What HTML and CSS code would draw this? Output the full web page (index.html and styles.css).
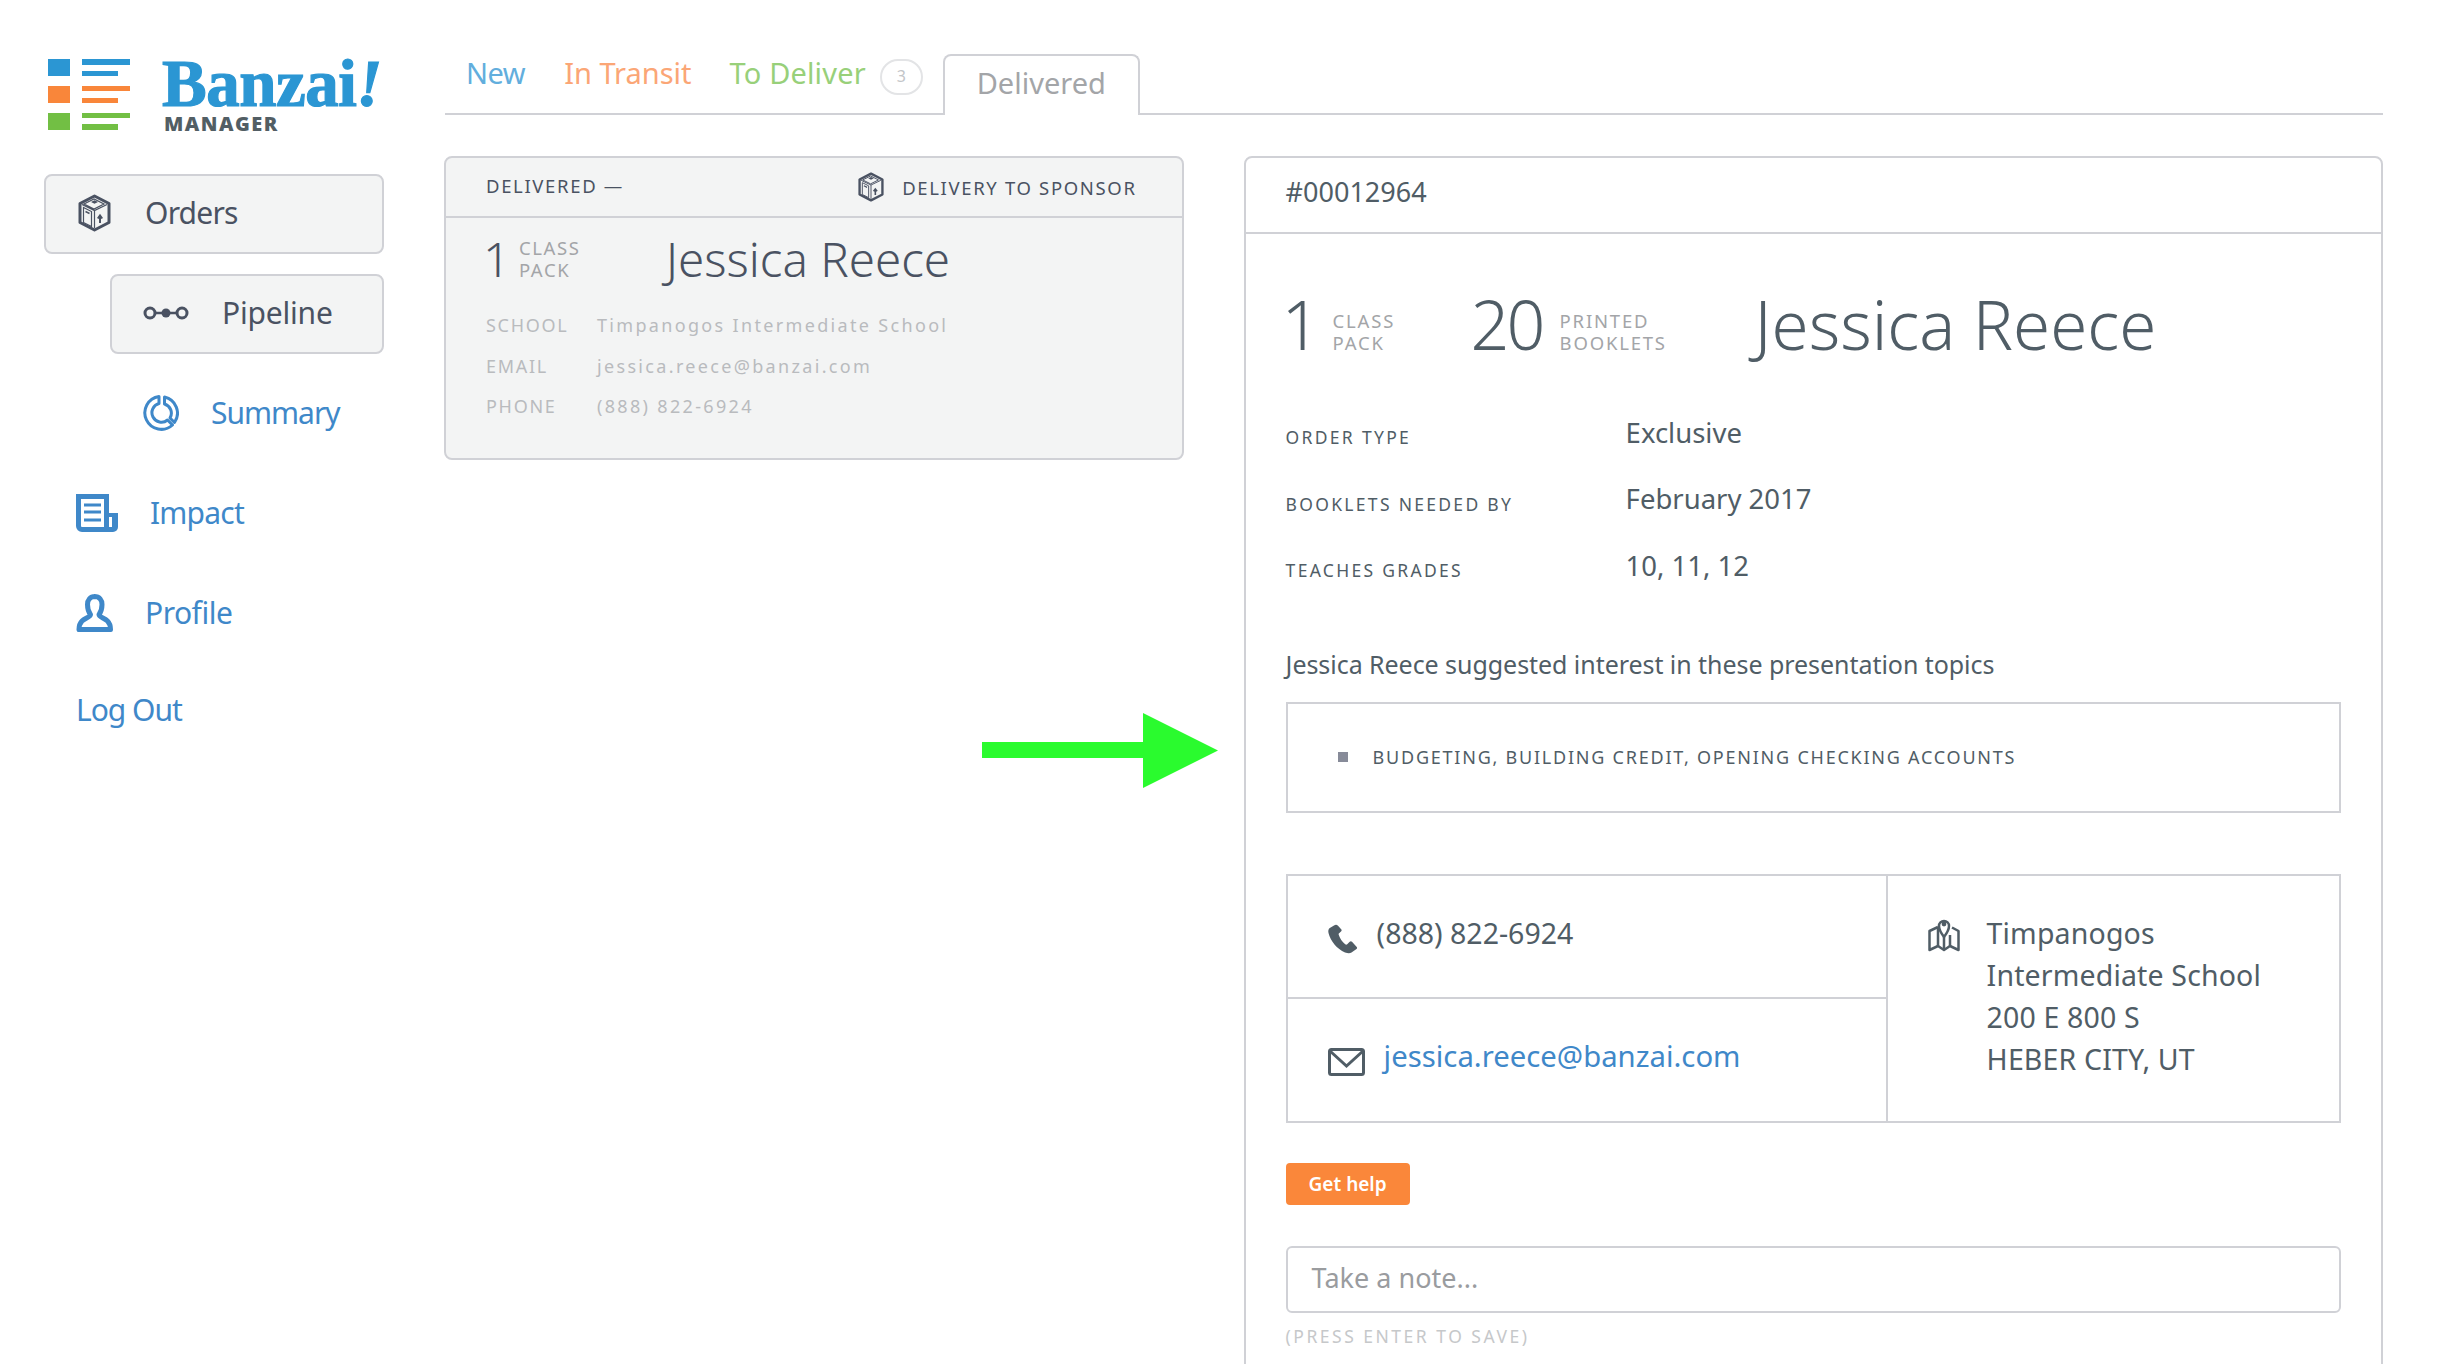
FILE: index.html
```html
<!DOCTYPE html>
<html lang="en">
<head>
<meta charset="utf-8">
<title>Banzai! Manager</title>
<link rel="stylesheet" href="styles.css">
</head>
<body>
<svg width="0" height="0" class="defs">
  <defs>
    <symbol id="box" viewBox="0 0 33 38">
      <path d="M16.5 2 31 9.5v19L16.5 36 2 28.500v-19z" fill="none" stroke="currentColor" stroke-width="3" stroke-linejoin="round"/>
      <path d="M4 10.500 16.500 16.500 29 10.500M16.500 16.500V34M5.500 13.500l8 4v15l-8-4zM6 10l10-5 10 5-10 5z" fill="none" stroke="currentColor" stroke-width="1.200"/>
      <path d="M13 8l3.500-1.800L20 8l-3.500 1.800z" fill="currentColor"/>
      <path d="M7.500 17.500l4 2" fill="none" stroke="currentColor" stroke-width="1.500"/>
      <path d="M22 29v-7M19.800 24.500 22 21.500l2.200 3" fill="none" stroke="currentColor" stroke-width="2"/>
    </symbol>
  </defs>
</svg>
<div class="page">
  <aside class="sidebar">
    <div class="logo">
      <svg class="logo-mark" viewBox="0 0 82 71" aria-hidden="true">
        <rect x="0" y="0" width="22" height="17" fill="#2b96d3"/>
        <rect x="34" y="0" width="48" height="6" fill="#2b96d3"/>
        <rect x="34" y="12" width="36" height="5" fill="#2b96d3"/>
        <rect x="0" y="27" width="22" height="17" fill="#f9863a"/>
        <rect x="34" y="27" width="48" height="5" fill="#f9863a"/>
        <rect x="34" y="39" width="36" height="5" fill="#f9863a"/>
        <rect x="0" y="54" width="22" height="17" fill="#72bf44"/>
        <rect x="34" y="54" width="48" height="5" fill="#72bf44"/>
        <rect x="34" y="65" width="36" height="6" fill="#72bf44"/>
      </svg>
      <div class="logo-words">
        <div class="logo-name">Banzai<em class="logo-bang">!</em></div>
        <div class="logo-sub">MANAGER</div>
      </div>
    </div>
    <nav class="nav">
      <a class="nav-item nav-orders is-box">
        <svg class="ic-orders"><use href="#box"/></svg>
        <span>Orders</span>
      </a>
      <a class="nav-item nav-pipeline is-box">
        <svg class="ic-pipeline" viewBox="0 0 46 14" aria-hidden="true">
          <circle cx="7" cy="7" r="5" fill="none" stroke="currentColor" stroke-width="3"/>
          <circle cx="23" cy="7" r="4.500" fill="currentColor"/>
          <circle cx="39" cy="7" r="5" fill="none" stroke="currentColor" stroke-width="3"/>
          <path d="M12 7h22" stroke="currentColor" stroke-width="2.500"/>
        </svg>
        <span>Pipeline</span>
      </a>
      <a class="nav-item nav-summary">
        <svg class="ic-summary" viewBox="0 0 36 36" aria-hidden="true">
          <path d="M16 1.500A16.500 16.500 0 1 0 29.500 30L24.500 25A9.500 9.500 0 1 1 16 8.500z" fill="none" stroke="currentColor" stroke-width="3" stroke-linejoin="round"/>
          <path d="M21.500 2A16.500 16.500 0 0 1 31.500 27.500L27 23A9.500 9.500 0 0 0 21.500 9z" fill="none" stroke="currentColor" stroke-width="3" stroke-linejoin="round"/>
        </svg>
        <span>Summary</span>
      </a>
      <a class="nav-item nav-impact">
        <svg class="ic-impact" viewBox="0 0 42 38" aria-hidden="true">
          <path d="M2.500 2.500h28v33H6a3.500 3.500 0 0 1-3.500-3.500z" fill="none" stroke="currentColor" stroke-width="5"/>
          <path d="M30 19h12v14a5 5 0 0 1-5 5h-7z" fill="currentColor"/>
          <path d="M33 23h3v10h-3z" fill="#fff"/>
          <path d="M8 11h17M8 18h17M8 26h17" stroke="currentColor" stroke-width="3"/>
        </svg>
        <span>Impact</span>
      </a>
      <a class="nav-item nav-profile">
        <svg class="ic-profile" viewBox="0 0 37 38" aria-hidden="true">
          <path d="M18.500 2.500c5 0 7.500 3.500 7.500 8 0 4.500-1 7.500-3 10 0 2.500 5.500 3.500 8.500 6.500 2 2 3 5 3 8.500H3c0-3.500 1-6.500 3-8.500 3-3 8.500-4 8.500-6.500-2-2.500-3-5.500-3-10 0-4.500 2.500-8 7.500-8z" fill="none" stroke="currentColor" stroke-width="5" stroke-linejoin="round"/>
          <path d="M1 33h35v3a2 2 0 0 1-2 2H3a2 2 0 0 1-2-2z" fill="currentColor"/>
        </svg>
        <span>Profile</span>
      </a>
      <a class="nav-item nav-logout"><span>Log Out</span></a>
    </nav>
  </aside>

  <main class="main">
    <div class="tabs">
      <a class="tab tab-new">New</a>
      <a class="tab tab-transit">In Transit</a>
      <a class="tab tab-deliver">To Deliver</a>
      <span class="badge">3</span>
      <a class="tab-active">Delivered</a>
    </div>
    <div class="content">
      <section class="order-card">
        <header class="order-head">
          <span class="status">DELIVERED —</span>
          <span class="delivery">
            <svg class="ic-delivery"><use href="#box"/></svg>
            DELIVERY TO SPONSOR
          </span>
        </header>
        <div class="order-body">
          <div class="order-title">
            <span class="count-sm">1</span>
            <span class="unit-sm">CLASS<br>PACK</span>
            <span class="name-sm">Jessica Reece</span>
          </div>
          <dl class="facts">
            <dt>SCHOOL</dt><dd>Timpanogos Intermediate School</dd>
            <dt>EMAIL</dt><dd>jessica.reece@banzai.com</dd>
            <dt>PHONE</dt><dd>(888) 822-6924</dd>
          </dl>
        </div>
      </section>

      <section class="detail">
        <header class="detail-head">#00012964</header>
        <div class="detail-body">
          <div class="detail-title">
            <span class="count-lg">1</span>
            <span class="unit-lg">CLASS<br>PACK</span>
            <span class="count-lg count-20">20</span>
            <span class="unit-lg">PRINTED<br>BOOKLETS</span>
            <span class="name-lg">Jessica Reece</span>
          </div>
          <div class="meta">
            <div class="meta-row"><span class="meta-key">ORDER TYPE</span><span class="meta-val">Exclusive</span></div>
            <div class="meta-row"><span class="meta-key">BOOKLETS NEEDED BY</span><span class="meta-val">February 2017</span></div>
            <div class="meta-row"><span class="meta-key">TEACHES GRADES</span><span class="meta-val">10, 11, 12</span></div>
          </div>
          <p class="topics-intro">Jessica Reece suggested interest in these presentation topics</p>
          <div class="topics"><i class="bullet"></i><span>BUDGETING, BUILDING CREDIT, OPENING CHECKING ACCOUNTS</span></div>
          <div class="contact">
            <div class="contact-left">
              <div class="contact-cell">
                <svg class="ic-phone" viewBox="0 0 30 30" aria-hidden="true">
                  <path d="M6 1.500 1.800 4C.5 5 0 6.500.5 9 2.500 17 9 25 17 28.500c3 1 5 1 6.500 0l5-3.500c.8-.8.8-1.500 0-2.300L24 17.800c-.8-.8-1.500-.8-2.300 0l-2.500 2.500c-.6.6-1.200.6-2 0-3-2.500-5.500-6-6.500-9.500-.2-.8 0-1.300.7-1.700L13 7.500c.7-.6.8-1.200.4-2L10 1.800C8.800.5 7.500.5 6 1.500z" fill="currentColor"/>
                </svg>
                <span>(888) 822-6924</span>
              </div>
              <div class="contact-cell cell-mail">
                <svg class="ic-mail" viewBox="0 0 37 28" aria-hidden="true">
                  <rect x="1.500" y="1.500" width="34" height="25" rx="2" fill="none" stroke="currentColor" stroke-width="3"/>
                  <path d="M2 3l16.500 15L35 3" fill="none" stroke="currentColor" stroke-width="3"/>
                </svg>
                <a class="mail-link">jessica.reece@banzai.com</a>
              </div>
            </div>
            <div class="contact-right">
              <svg class="ic-map" viewBox="0 0 32 36" aria-hidden="true">
                <path d="M10 11 1.500 15v19L10 30l6 4 6-4 8.500 4V15L24 11.500" fill="none" stroke="currentColor" stroke-width="2.500" stroke-linejoin="round"/>
                <path d="M10 11v19M22 19v11M16 21v13" fill="none" stroke="currentColor" stroke-width="2.500"/>
                <path d="M16 21c-3-4-5-7-5-11a5 5 0 0 1 10 0c0 4-2 7-5 11z" fill="#fff" stroke="currentColor" stroke-width="2.500"/>
                <circle cx="16" cy="8" r="2.400" fill="currentColor"/>
              </svg>
              <address class="address">Timpanogos<br>Intermediate School<br>200 E 800 S<br>HEBER CITY, UT</address>
            </div>
          </div>
          <button class="help">Get help</button>
          <div class="note">Take a note...</div>
          <div class="hint">(PRESS ENTER TO SAVE)</div>
        </div>
      </section>
    </div>
  </main>
</div>
<svg class="arrow" viewBox="0 0 236 75" aria-hidden="true">
  <path d="M0 29h161V0l75 37.500-75 37.500V45H0z" fill="#2afb2e"/>
</svg>
</body>
</html>
```

FILE: styles.css
```css
* { box-sizing: border-box; }
html, body { margin: 0; padding: 0; background: #fff; }
body {
  width: 2442px;
  height: 1364px;
  overflow: hidden;
  position: relative;
  font-family: "Noto Sans", "Open Sans", sans-serif;
  color: #505d66;
}
.defs { position: absolute; }
.page { display: flex; align-items: flex-start; }

/* sidebar */
.sidebar { width: 444px; flex: none; padding: 55px 60px 0 44px; }
.logo { display: flex; padding-left: 4px; height: 119px; }
.logo-mark { width: 82px; height: 71px; margin-top: 4px; flex: none; }
.logo-words { margin-left: 32px; }
.logo-name {
  font-family: "Liberation Serif", serif;
  font-weight: 700;
  font-size: 67px;
  line-height: 56px;
  letter-spacing: -0.5px;
  color: #2b96d3;
  -webkit-text-stroke: 1.2px #2b96d3;
}
.logo-bang { font-style: italic; }
.logo-sub {
  font-family: "Open Sans", sans-serif;
  font-weight: 800;
  font-size: 20px;
  line-height: 20px;
  letter-spacing: 1.500px;
  margin: 3px 0 0 2px;
  color: #525e64;
}
.nav { display: flex; flex-direction: column; }
.nav-item {
  display: flex;
  align-items: center;
  padding-bottom: 3px;
  font-size: 30px;
  letter-spacing: -0.8px;
  color: #3f88c9;
}
.is-box {
  height: 80px;
  border: 2px solid #d0d1d6;
  border-radius: 8px;
  background: #f3f4f4;
  color: #4a5262;
}
.nav-orders { padding-left: 32px; gap: 34px; }
.nav-pipeline { margin: 20px 0 0 66px; padding-left: 31px; gap: 33px; letter-spacing: -0.2px; }
.nav-summary { height: 100px; margin-top: 10px; padding-left: 99px; gap: 32px; letter-spacing: -1px; }
.nav-impact { height: 100px; padding-left: 32px; gap: 32px; }
.nav-profile { height: 100px; padding-left: 32px; gap: 32px; letter-spacing: -0.5px; }
.nav-logout { height: 94px; padding-left: 32px; letter-spacing: -1px; }
.ic-orders { width: 33px; height: 38px; }
.ic-pipeline { width: 46px; height: 14px; }
.ic-summary { width: 36px; height: 36px; }
.ic-impact { width: 42px; height: 38px; }
.ic-profile { width: 37px; height: 38px; }

/* tabs */
.main { width: 1939px; flex: none; }
.tabs {
  height: 115px;
  display: flex;
  align-items: flex-start;
  border-bottom: 2px solid #d0d1d6;
  margin-left: 1px;
  padding-left: 21px;
}
.tab { font-size: 29px; line-height: 40px; margin-top: 53px; }
.tab-new { color: #62aedd; margin-right: 39px; letter-spacing: -0.5px; }
.tab-transit { color: #fba676; margin-right: 38px; }
.tab-deliver { color: #98d07a; margin-right: 14px; letter-spacing: 0.15px; }
.badge {
  width: 43px;
  height: 36px;
  margin-top: 59px;
  border: 2px solid #e3e4e6;
  border-radius: 18px;
  text-align: center;
  font-size: 16px;
  line-height: 30px;
  color: #c3c5c8;
}
.tab-active {
  width: 197px;
  height: 61px;
  margin: 54px 0 -2px 20px;
  border: 2px solid #d0d1d6;
  border-bottom: 0;
  border-radius: 8px 8px 0 0;
  background: #fff;
  text-align: center;
  font-size: 29px;
  line-height: 54px;
  color: #a3a5a8;
}

/* content */
.content { display: flex; align-items: flex-start; margin-top: 41px; gap: 60px; }
.order-card {
  width: 740px;
  height: 304px;
  border: 2px solid #d0d1d6;
  border-radius: 8px;
  background: #f3f4f4;
}
.order-head {
  height: 60px;
  display: flex;
  justify-content: space-between;
  align-items: center;
  padding: 0 45px 0 40px;
  border-bottom: 2px solid #d0d1d6;
  font-size: 18.500px;
  letter-spacing: 1.650px;
  color: #4a5262;
}
.status { margin-top: -4px; }
.delivery { display: flex; align-items: center; gap: 18px; }
.ic-delivery { width: 26px; height: 30px; }
.order-body { padding: 0 40px; }
.order-title { display: flex; align-items: center; height: 81px; }
.count-sm { font-size: 48px; font-weight: 300; width: 33px; margin-left: -3px; margin-right: 3px; color: #4a5262; }
.unit-sm { font-size: 18.500px; line-height: 22px; letter-spacing: 1.600px; color: #a3a5a8; width: 147px; }
.name-sm { font-size: 47.500px; font-weight: 300; color: #4a5262; }
.facts {
  display: grid;
  grid-template-columns: 111px 1fr;
  grid-auto-rows: 40.500px;
  align-items: center;
  margin: 6px 0 0;
  font-size: 18px;
  letter-spacing: 2.330px;
  color: #b9bbbe;
}
.facts dt { letter-spacing: 1.700px; }
.facts dd { margin: 0; }

.detail {
  width: 1140px;
  height: 1300px;
  border: 2px solid #d0d1d6;
  border-radius: 8px 8px 0 0;
  background: #fff;
}
.detail-head {
  height: 76px;
  padding-left: 40px;
  border-bottom: 2px solid #d0d1d6;
  font-size: 27px;
  line-height: 68px;
}
.detail-body { padding: 0 40px; }
.detail-title { display: flex; align-items: center; height: 150px; margin-top: 15px; }
.count-lg { font-size: 68px; font-weight: 300; line-height: 80px; width: 47px; margin-left: -4px; margin-right: 4px; }
.count-20 { width: 89px; margin: 0; letter-spacing: -3px; }
.unit-lg { font-size: 18.500px; line-height: 22px; letter-spacing: 1.800px; color: #a3a5a8; margin-top: 16px; }
.unit-lg:nth-child(2) { width: 138px; }
.unit-lg:nth-child(4) { width: 195px; }
.name-lg { font-size: 67.200px; font-weight: 300; }
.meta { margin-top: 0; }
.meta-row { display: flex; height: 66.500px; align-items: center; }
.meta-key { width: 340px; font-size: 17.500px; letter-spacing: 2.300px; margin-top: 10px; }
.meta-val { font-size: 27.500px; }
.topics-intro { margin: 45px 0 0; font-size: 25px; line-height: 40px; letter-spacing: -0.05px; }
.topics {
  height: 111px;
  margin-top: 18px;
  display: flex;
  align-items: center;
  padding-left: 50px;
  border: 2px solid #d0d1d6;
  font-size: 18px;
  letter-spacing: 1.770px;
}
.bullet { width: 10px; height: 10px; background: #878b99; margin-right: 25px; }
.contact {
  display: flex;
  height: 249px;
  margin-top: 61px;
  border: 2px solid #d0d1d6;
  font-size: 28.500px;
}
.contact-left { width: 600px; display: flex; flex-direction: column; border-right: 2px solid #d0d1d6; }
.contact-cell { flex: 1; display: flex; align-items: flex-start; padding: 37px 0 0 40px; gap: 19px; line-height: 40px; }
.cell-mail { border-top: 2px solid #d0d1d6; padding-top: 37px; }
.ic-phone { width: 30px; height: 30px; margin-top: 11px; }
.ic-mail { width: 37px; height: 28px; margin-top: 12px; }
.mail-link { color: #3f88c9; font-size: 29.300px; }
.contact-right { flex: 1; display: flex; padding: 36px 0 0 40px; gap: 27px; }
.ic-map { width: 32px; height: 36px; margin-top: 4px; flex: none; }
.address { font-style: normal; line-height: 42px; letter-spacing: 0.15px; }
.help {
  display: block;
  width: 124px;
  height: 42px;
  margin-top: 40px;
  padding: 0;
  border: 0;
  border-radius: 4px;
  background: #fa873a;
  color: #fff;
  font-family: inherit;
  font-size: 19px;
  font-weight: 600;
}
.note {
  height: 67px;
  margin-top: 41px;
  padding-left: 24px;
  border: 2px solid #d0d1d6;
  border-radius: 6px;
  font-size: 27px;
  line-height: 60px;
  color: #9a9c9f;
}
.hint { margin-top: 11px; font-size: 17.500px; line-height: 24px; letter-spacing: 2.500px; color: #c6c8ca; }

.arrow { position: absolute; left: 982px; top: 713px; width: 236px; height: 75px; }
```
